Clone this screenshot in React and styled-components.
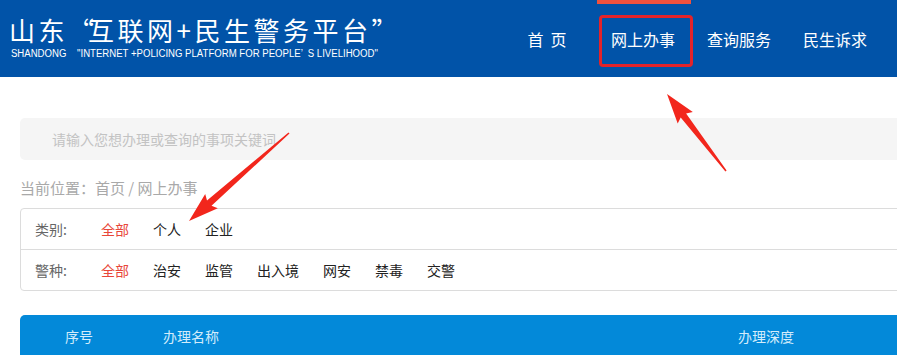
import React from "react";
import styled, { createGlobalStyle } from "styled-components";

const GlobalStyle = createGlobalStyle`
  html, body {
    margin: 0;
    padding: 0;
    background: #fff;
    overflow: hidden;
  }
  body {
    font-family: "Noto Sans CJK SC", "Noto Sans", sans-serif;
  }
`;

const Page = styled.div`
  position: relative;
  width: 897px;
  height: 355px;
  overflow: hidden;
`;

const Header = styled.header`
  height: 77px;
  background: #0153a8;
  display: flex;
  align-items: flex-start;
  justify-content: space-between;
`;

const Brand = styled.div`
  padding: 14px 0 0 9px;
  color: #fff;
`;

const BrandTitle = styled.div`
  font-size: 26px;
  line-height: 31px;
  letter-spacing: 3.5px;
  white-space: nowrap;
`;

const Quote = styled.span`
  letter-spacing: ${({ $open }) => ($open ? "-6px" : "0")};
`;

const BrandSub = styled.div`
  font-family: "Liberation Sans", sans-serif;
  font-size: 10px;
  line-height: 12px;
  margin-top: 3px;
  padding-left: 2px;
  white-space: nowrap;
  transform: scaleX(0.96);
  transform-origin: left center;
`;

const Nav = styled.nav`
  display: flex;
  height: 77px;
  padding-right: 14px;
`;

const NavItem = styled.a`
  position: relative;
  display: flex;
  align-items: center;
  justify-content: center;
  width: ${({ $w }) => $w}px;
  height: 77px;
  color: #fff;
  font-size: 16px;
  white-space: pre;
  text-decoration: none;

  &::before {
    content: "";
    display: ${({ $active }) => ($active ? "block" : "none")};
    position: absolute;
    top: 0;
    left: 2px;
    right: 0;
    height: 4px;
    background: #f0513d;
  }

  &::after {
    content: "";
    display: ${({ $marked }) => ($marked ? "block" : "none")};
    position: absolute;
    top: 15px;
    left: 4px;
    right: -2px;
    height: 46px;
    border: 3px solid #e3232a;
    border-radius: 4px;
  }
`;

const Main = styled.main`
  width: 1100px;
  padding: 41px 0 0 20px;
`;

const Search = styled.div`
  height: 42px;
  background: #f5f5f5;
  border-radius: 5px;
  display: flex;
  align-items: center;
  padding-left: 32px;
  font-size: 14px;
  color: #c3c3c3;
`;

const Crumb = styled.div`
  margin-top: 18px;
  height: 20px;
  line-height: 20px;
  font-size: 15px;
  color: #a9a9a9;
  white-space: pre;
`;

const Filters = styled.div`
  margin-top: 10px;
  border: 1px solid #dcdcdc;
  border-radius: 4px;
`;

const FilterRow = styled.div`
  display: flex;
  align-items: center;
  height: 40px;
  padding-left: 14px;
  font-size: 14px;
  & + & {
    border-top: 1px solid #dcdcdc;
  }
`;

const FilterLabel = styled.span`
  width: 66px;
  color: #666;
`;

const FilterOption = styled.span`
  margin-right: 24px;
  color: ${({ $on }) => ($on ? "#e8473a" : "#222")};
`;

const TableHead = styled.div`
  margin-top: 24px;
  height: 42px;
  background: #0389d9;
  border-radius: 5px 5px 0 0;
  display: flex;
  align-items: center;
  font-size: 14px;
  color: #d3ecfb;
`;

const Col = styled.span`
  width: ${({ $w }) => $w}px;
  padding-left: ${({ $pl }) => $pl || 0}px;
  box-sizing: border-box;
`;

const Overlay = styled.svg`
  position: absolute;
  left: 0;
  top: 0;
  pointer-events: none;
`;

const Arrow = ({ x1, y1, x2, y2 }) => {
  const dx = x2 - x1;
  const dy = y2 - y1;
  const len = Math.hypot(dx, dy);
  const ux = dx / len;
  const uy = dy / len;
  const nx = -uy;
  const ny = ux;
  const head = 27;
  const bx = x2 - ux * head;
  const by = y2 - uy * head;
  const p = (x, y) => `${x.toFixed(1)},${y.toFixed(1)}`;
  const pts = [
    p(x1 + nx * 0.8, y1 + ny * 0.8),
    p(bx + nx * 3.4, by + ny * 3.4),
    p(bx + nx * 9.5 - ux * 3, by + ny * 9.5 - uy * 3),
    p(x2, y2),
    p(bx - nx * 9.5 - ux * 3, by - ny * 9.5 - uy * 3),
    p(bx - nx * 3.4, by - ny * 3.4),
    p(x1 - nx * 0.8, y1 - ny * 0.8),
  ].join(" ");
  return <polygon points={pts} fill="#f2261c" />;
};

const kinds = ["全部", "个人", "企业"];
const police = ["全部", "治安", "监管", "出入境", "网安", "禁毒", "交警"];

export default function App() {
  return (
    <Page>
      <GlobalStyle />
      <Header>
        <Brand>
          <BrandTitle>
            山东<Quote $open>“</Quote>互联网+民生警务平台<Quote>”</Quote>
          </BrandTitle>
          <BrandSub>
            SHANDONG &nbsp;&nbsp;&nbsp;"INTERNET +POLICING PLATFORM FOR PEOPLE’ &nbsp;S LIVELIHOOD"
          </BrandSub>
        </Brand>
        <Nav>
          <NavItem $w={96}>{"首  页"}</NavItem>
          <NavItem $w={96} $active $marked>
            网上办事
          </NavItem>
          <NavItem $w={96}>查询服务</NavItem>
          <NavItem $w={96}>民生诉求</NavItem>
        </Nav>
      </Header>
      <Main>
        <Search>请输入您想办理或查询的事项关键词</Search>
        <Crumb>{"当前位置：首页 / 网上办事"}</Crumb>
        <Filters>
          <FilterRow>
            <FilterLabel>类别:</FilterLabel>
            {kinds.map((k, i) => (
              <FilterOption key={k} $on={i === 0}>
                {k}
              </FilterOption>
            ))}
          </FilterRow>
          <FilterRow>
            <FilterLabel>警种:</FilterLabel>
            {police.map((k, i) => (
              <FilterOption key={k} $on={i === 0}>
                {k}
              </FilterOption>
            ))}
          </FilterRow>
        </Filters>
        <TableHead>
          <Col $w={143} $pl={45}>序号</Col>
          <Col $w={575}>办理名称</Col>
          <Col $w={200}>办理深度</Col>
        </TableHead>
      </Main>
      <Overlay width="897" height="355">
        <Arrow x1={726} y1={171} x2={667} y2={94} />
        <Arrow x1={289} y1={133} x2={189} y2={221} />
      </Overlay>
    </Page>
  );
}
